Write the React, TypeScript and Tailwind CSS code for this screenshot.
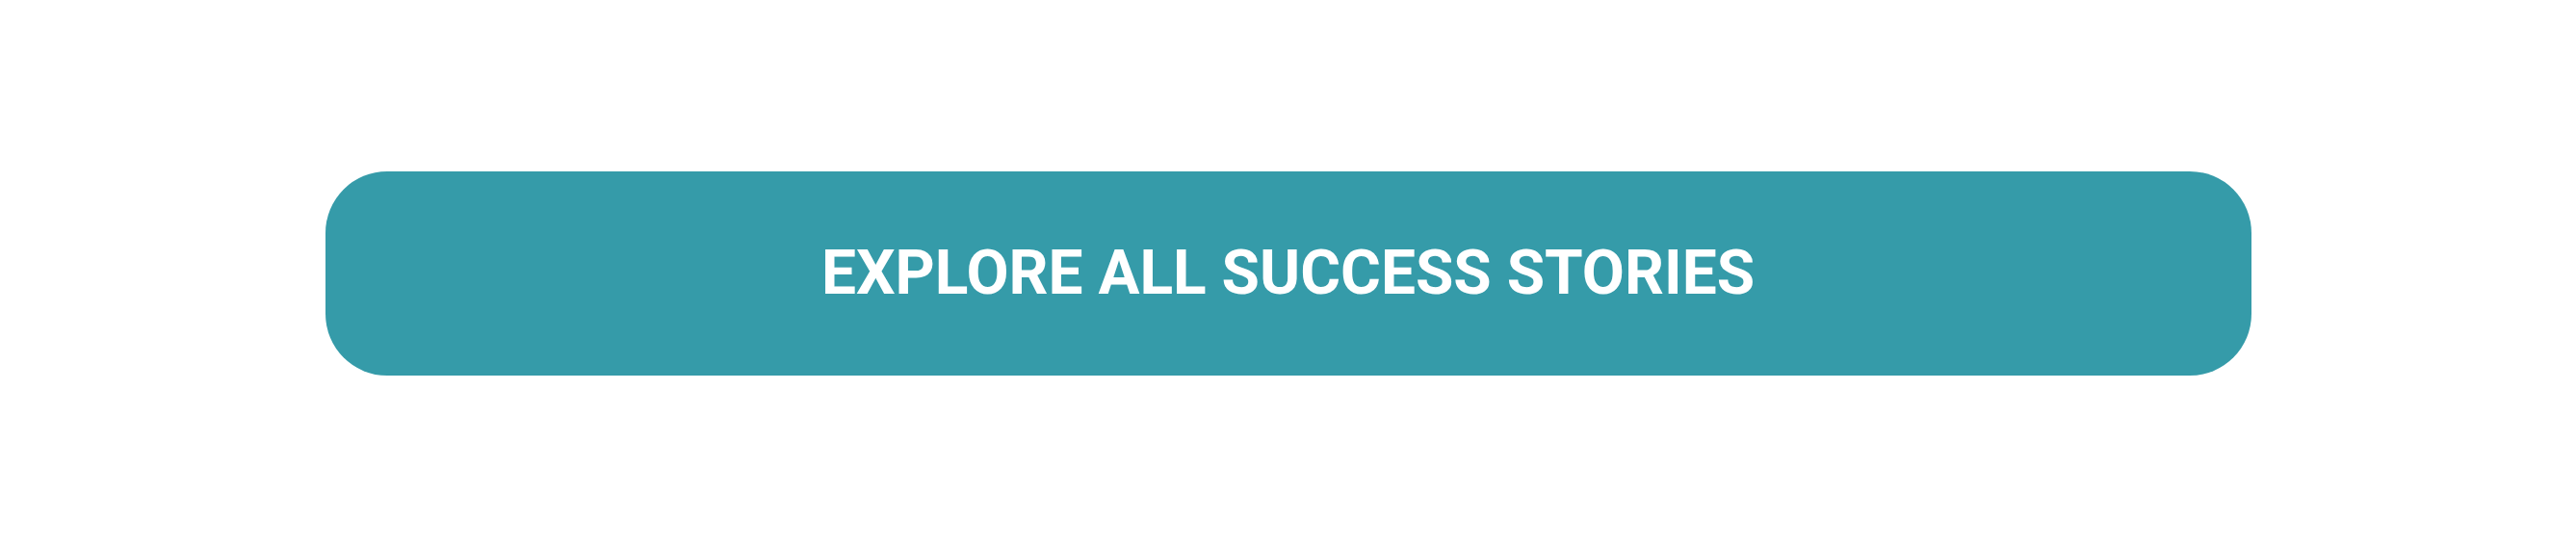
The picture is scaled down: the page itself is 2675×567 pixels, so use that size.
export default function App() {
  return (
    <div className="flex h-[567px] w-full items-center justify-center bg-white">
      <a
        href="#"
        className="flex h-[212px] w-[2000px] items-center justify-center rounded-[64px] bg-[#359ba9] font-['Roboto',sans-serif] text-[64px] font-bold uppercase leading-none text-white"
      >
        Explore All Success Stories
      </a>
    </div>
  );
}
